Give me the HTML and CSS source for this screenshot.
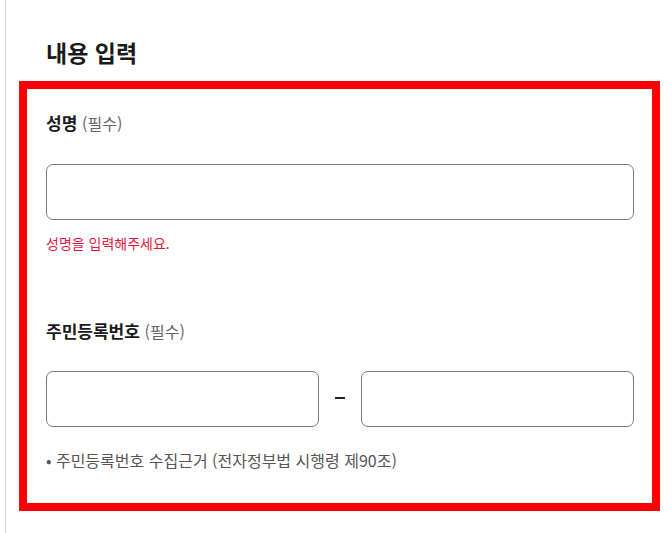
FILE: index.html
```html
<!DOCTYPE html>
<html lang="ko">
<head>
<meta charset="utf-8">
<title>내용 입력</title>
<link rel="stylesheet" href="styles.css">
</head>
<body>
<div class="card">
  <h2 class="title">내용 입력</h2>
  <div class="box">
    <div class="field">
      <label class="label" for="name">성명 <span class="req">(필수)</span></label>
      <input class="input" id="name" type="text">
      <p class="error">성명을 입력해주세요.</p>
    </div>
    <div class="field field-rrn">
      <label class="label" for="rrn1">주민등록번호 <span class="req">(필수)</span></label>
      <div class="rrn-row">
        <input class="input" id="rrn1" type="text">
        <span class="dash" aria-hidden="true"></span>
        <input class="input" id="rrn2" type="password">
      </div>
      <p class="note">• 주민등록번호 수집근거 (전자정부법 시행령 제90조)</p>
    </div>
  </div>
</div>
</body>
</html>
```

FILE: styles.css
```css
* { box-sizing: border-box; }
html, body { margin: 0; padding: 0; background: #fff; overflow: hidden; }
body {
  font-family: "Noto Sans CJK KR", "Noto Sans", sans-serif;
  color: #1a1a1a;
}
.card {
  margin: -10px 0 0 5px;
  border: 1px solid #d2d2d2;
  border-right: none;
  border-radius: 10px 0 0 0;
  padding: 45px 12px 40px 13px;
  min-height: 560px;
}
.title {
  margin: 0 0 13px;
  padding-left: 27px;
  font-size: 23px;
  line-height: 32px;
  font-weight: 700;
  color: #1a1a1a;
}
.box {
  border: 8px solid #ff0000;
  padding: 22px 18px 32px 19px;
}
.field { display: flex; flex-direction: column; }
.label {
  font-size: 17px;
  line-height: 24px;
  font-weight: 700;
  color: #1a1a1a;
}
.req {
  font-size: 16px;
  font-weight: 400;
  color: #666;
}
.input {
  display: block;
  width: 100%;
  height: 56px;
  margin-top: 29px;
  border: 1px solid #7a7a7a;
  border-radius: 7px;
  background: #fff;
  font: inherit;
  outline: none;
}
.error {
  margin: 13px 0 0;
  font-size: 14px;
  line-height: 20px;
  color: #e8163c;
}
.field-rrn { margin-top: 66px; }
.rrn-row {
  display: flex;
  align-items: center;
  margin-top: 28px;
}
.rrn-row .input { margin-top: 0; flex: 1 1 0; }
.dash {
  flex: 0 0 42px;
  display: flex;
  justify-content: center;
}
.dash::before {
  content: "";
  width: 10px;
  height: 1.5px;
  background: #222;
  margin-top: -2px;
}
.note {
  margin: 22px 0 0;
  font-size: 16px;
  line-height: 22px;
  color: #555;
}
```
